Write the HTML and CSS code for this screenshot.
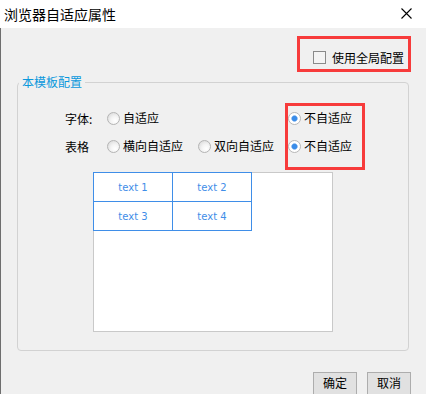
FILE: index.html
```html
<!DOCTYPE html>
<html lang="zh-CN">
<head>
<meta charset="utf-8">
<title>浏览器自适应属性</title>
<link rel="stylesheet" href="styles.css">
</head>
<body>
<div class="window">
  <div class="titlebar">
    <span class="title">浏览器自适应属性</span>
    <svg class="close" width="11" height="11" viewBox="0 0 11 11"><path d="M0.5 0.5 L10.5 10.5 M10.5 0.5 L0.5 10.5" stroke="#000" stroke-width="1.1" fill="none"/></svg>
  </div>
  <div class="content">
    <div class="global-row">
      <label class="global mark"><span class="checkbox"></span>使用全局配置</label>
    </div>
    <fieldset class="group">
      <legend>本模板配置</legend>
      <div class="options">
        <div class="opt-grid">
          <span class="lbl">字体:</span>
          <label class="radio-item"><span class="radio"></span>自适应</label>
          <span></span>
          <span class="lbl">表格</span>
          <label class="radio-item"><span class="radio"></span>横向自适应</label>
          <label class="radio-item"><span class="radio"></span>双向自适应</label>
        </div>
        <div class="col-c mark">
          <label class="radio-item"><span class="radio checked"></span>不自适应</label>
          <label class="radio-item"><span class="radio checked"></span>不自适应</label>
        </div>
      </div>
      <div class="preview">
        <div class="cells">
          <div class="cell">text 1</div>
          <div class="cell">text 2</div>
          <div class="cell">text 3</div>
          <div class="cell">text 4</div>
        </div>
      </div>
    </fieldset>
    <div class="buttons">
      <button class="btn">确定</button>
      <button class="btn">取消</button>
    </div>
  </div>
</div>
</body>
</html>
```
FILE: styles.css
```css
* { box-sizing: border-box; }
html, body { margin: 0; padding: 0; }
body {
  font-family: "Noto Sans CJK SC", "Noto Sans", sans-serif;
  font-size: 12px;
  color: #000;
  background: #f0f0f0;
}
.window {
  width: 426px;
  height: 394px;
  overflow: hidden;
}
.titlebar {
  height: 28px;
  background: #fff;
  display: flex;
  align-items: center;
  justify-content: space-between;
  padding-left: 4px;
  padding-right: 14px;
}
.title {
  font-size: 14px;
  line-height: 28px;
}
.close { display: block; margin-top: -1px; }
.content {
  height: 366px;
  background: #f0f0f0;
  box-shadow: inset 1px 0 #6e6e6e;
  padding-top: 8px;
}
.global-row {
  display: flex;
  justify-content: flex-end;
  padding-right: 15px;
}
.mark { border: 3px solid #f73b3b; }
.global {
  width: 114px;
  height: 36px;
  display: flex;
  align-items: center;
  padding: 7px 0 0 13px;
  line-height: 16px;
  gap: 6px;
}
.checkbox {
  width: 13px;
  height: 13px;
  border: 1px solid #8a8a8a;
  background: #f4f4f4;
  display: block;
}
.group {
  margin: 2px 17px 0;
  padding: 0;
  border: 1px solid #d2d2d2;
  border-radius: 4px;
  min-inline-size: 0;
}
.group legend {
  color: #0a98dc;
  font-size: 12px;
  line-height: 16px;
  padding: 0 3px;
  margin-left: 1px;
}
.options {
  display: flex;
  align-items: flex-start;
  margin-top: 13px;
  padding-left: 47px;
}
.opt-grid {
  display: grid;
  grid-template-columns: 42px 91px 87px;
  grid-auto-rows: 28px;
  align-items: center;
  padding-top: 1px;
}
.radio-item {
  display: flex;
  align-items: center;
  gap: 3px;
  line-height: 16px;
  white-space: nowrap;
}
.radio {
  width: 13px;
  height: 13px;
  border-radius: 50%;
  border: 1px solid #b4b4b4;
  background: radial-gradient(circle at 65% 70%, #ffffff 0%, #f4f4f4 40%, #d4d4d4 100%);
  display: block;
  flex: none;
}
.radio.checked {
  background: radial-gradient(circle, #3b8de9 0, #3b8de9 2.2px, #9cc4f2 3px, #ffffff 3.6px);
  border-color: #b8b8b8;
}
.col-c {
  width: 80px;
  display: flex;
  flex-direction: column;
  gap: 4px;
  padding: 0 0 9px 0;
}
.col-c .radio-item { height: 24px; }
.preview {
  margin: 2px 0 18px 75px;
  width: 240px;
  height: 160px;
  background: #fff;
  border: 1px solid #c9c9c9;
}
.cells {
  display: grid;
  grid-template-columns: 79px 79px;
  grid-auto-rows: 29px;
  width: 159px;
  margin: -1px 0 0 -1px;
  border-top: 1px solid #3f8ee8;
  border-left: 1px solid #3f8ee8;
}
.cell {
  border-right: 1px solid #3f8ee8;
  border-bottom: 1px solid #3f8ee8;
  display: flex;
  align-items: center;
  justify-content: center;
  font-family: "DejaVu Sans", sans-serif;
  font-size: 10px;
  color: #3f8ee8;
}
.buttons {
  display: flex;
  justify-content: flex-end;
  gap: 10px;
  padding-right: 15px;
  margin-top: 21px;
}
.btn {
  width: 44px;
  height: 23px;
  padding: 0 0 1px;
  border: 1px solid #adadad;
  background: #e1e1e1;
  font-family: "Noto Sans CJK SC", "Noto Sans", sans-serif;
  font-size: 12px;
  line-height: 16px;
  color: #000;
}
```
